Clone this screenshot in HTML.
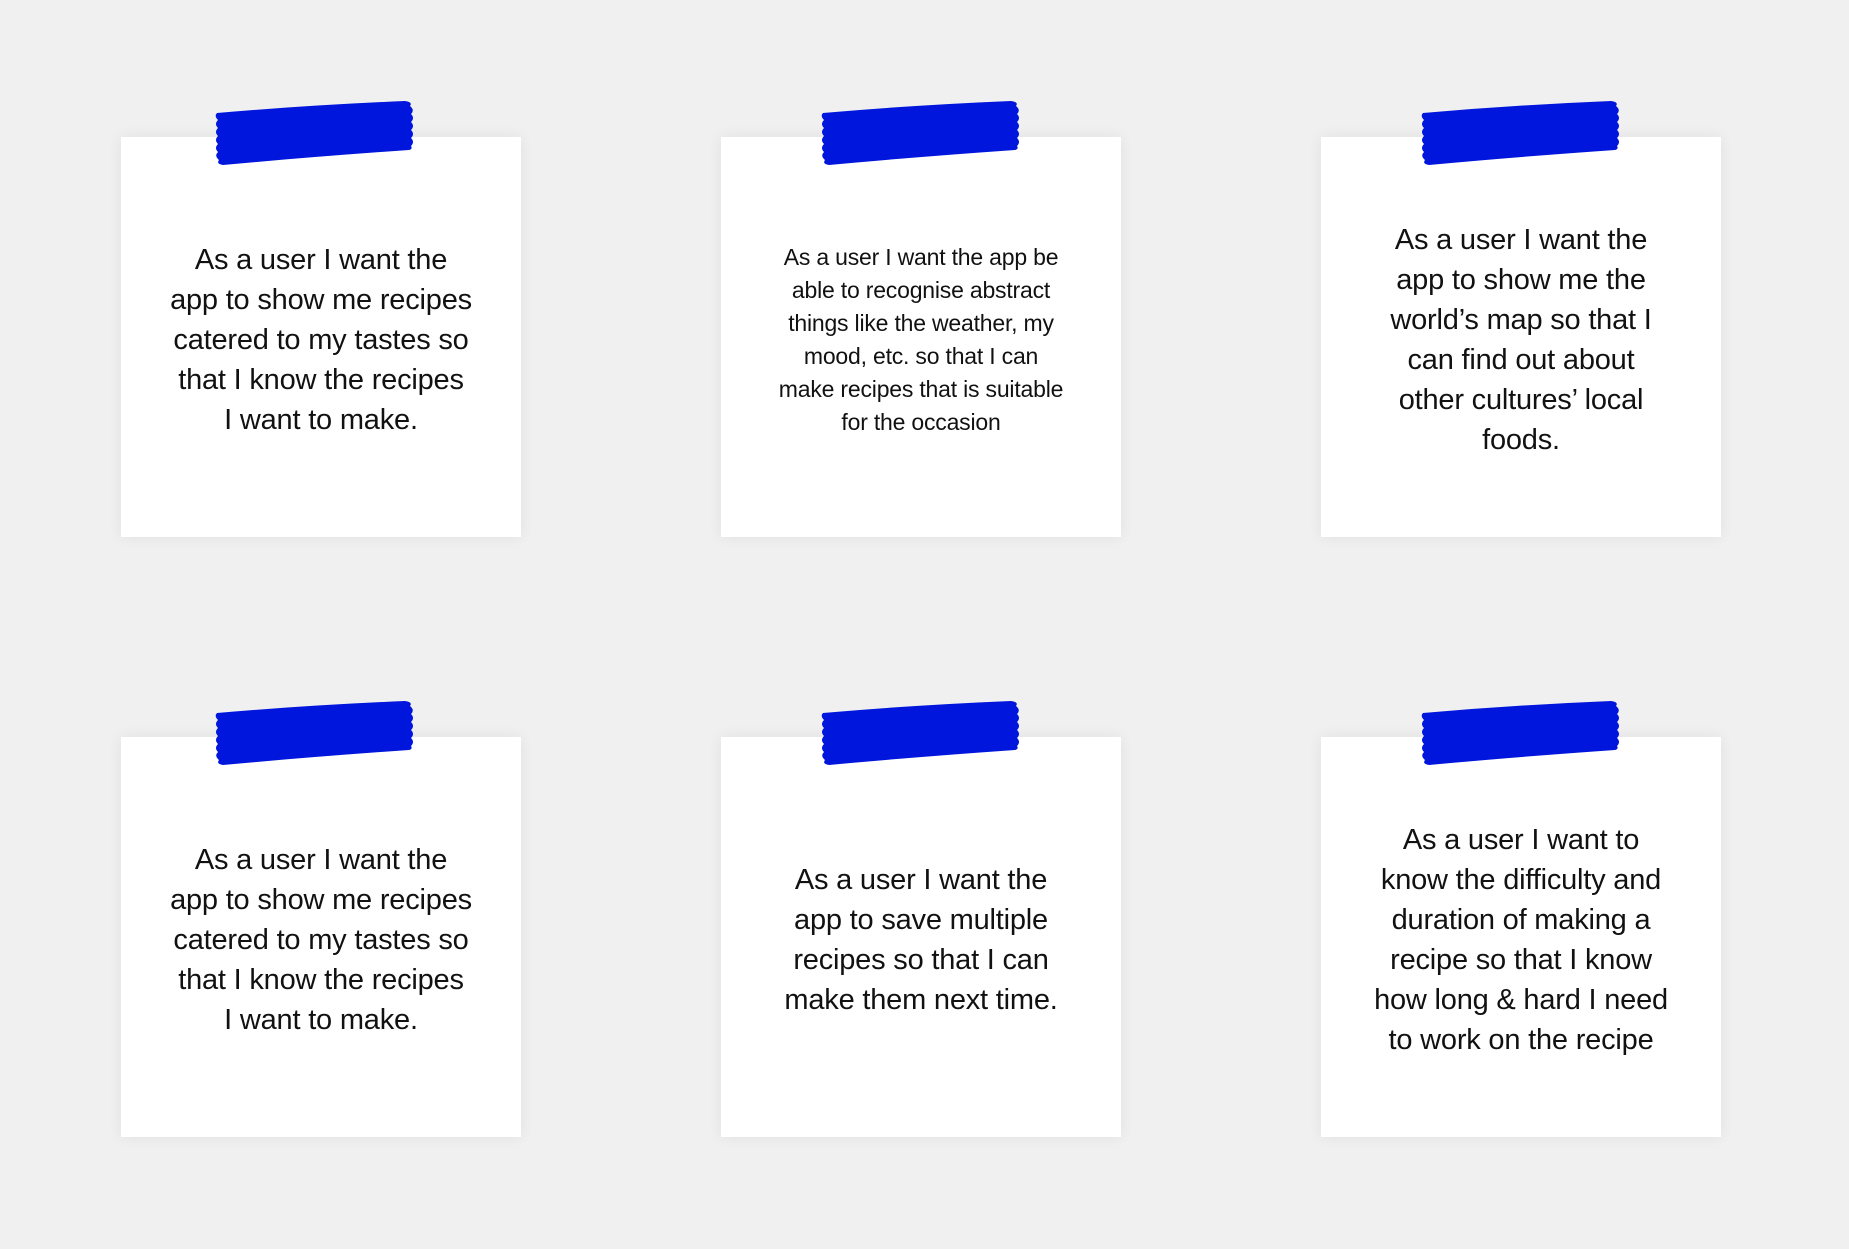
<!DOCTYPE html>
<html><head><meta charset="utf-8"><style>
html,body{margin:0;padding:0;}
body{width:1849px;height:1249px;background:#f0f0f0;position:relative;overflow:hidden;font-family:"Segoe UI","Liberation Sans",sans-serif;}
.card{position:absolute;width:400px;height:400px;background:#fff;box-shadow:0 0 14px rgba(0,0,0,0.07);display:flex;align-items:center;justify-content:center;text-align:center;color:#111;}
.card p{margin:0;padding-top:5px;font-size:29px;line-height:40px;white-space:nowrap;letter-spacing:-0.2px;}
.card p.s{font-size:23px;line-height:33px;}
.tape{position:absolute;left:88px;top:-40px;}
.c2 .tape,.c3 .tape{left:94px;}
</style></head><body>
<svg width="0" height="0" style="position:absolute"><defs>
<path id="t" d="M8 16 Q100 8 196 4 Q204 5 201 9 Q206 13 202 17 Q206 21 202 25 Q206 29 202 33 Q206 37 202 41 Q206 45 202 49 Q204 52 200 53 Q100 60 14 68 Q7 67 10 63 Q5 59 9 55 Q5 51 9 47 Q5 43 9 39 Q5 35 9 31 Q5 27 9 23 Q5 19 8 16 Z"/>
</defs></svg>

<div class="card" style="left:121px;top:137px"><svg class="tape" width="214" height="76"><use href="#t" fill="#0016dc"/></svg><p>As a user I want the<br>app to show me recipes<br>catered to my tastes so<br>that I know the recipes<br>I want to make.</p></div>

<div class="card c2" style="left:721px;top:137px"><svg class="tape" width="214" height="76"><use href="#t" fill="#0016dc"/></svg><p class="s">As a user I want the app be<br>able to recognise abstract<br>things like the weather, my<br>mood, etc. so that I can<br>make recipes that is suitable<br>for the occasion</p></div>

<div class="card c3" style="left:1321px;top:137px"><svg class="tape" width="214" height="76"><use href="#t" fill="#0016dc"/></svg><p>As a user I want the<br>app to show me the<br>world’s map so that I<br>can find out about<br>other cultures’ local<br>foods.</p></div>

<div class="card" style="left:121px;top:737px"><svg class="tape" width="214" height="76"><use href="#t" fill="#0016dc"/></svg><p>As a user I want the<br>app to show me recipes<br>catered to my tastes so<br>that I know the recipes<br>I want to make.</p></div>

<div class="card c2" style="left:721px;top:737px"><svg class="tape" width="214" height="76"><use href="#t" fill="#0016dc"/></svg><p>As a user I want the<br>app to save multiple<br>recipes so that I can<br>make them next time.</p></div>

<div class="card c3" style="left:1321px;top:737px"><svg class="tape" width="214" height="76"><use href="#t" fill="#0016dc"/></svg><p>As a user I want to<br>know the difficulty and<br>duration of making a<br>recipe so that I know<br>how long &amp; hard I need<br>to work on the recipe</p></div>
</body></html>
